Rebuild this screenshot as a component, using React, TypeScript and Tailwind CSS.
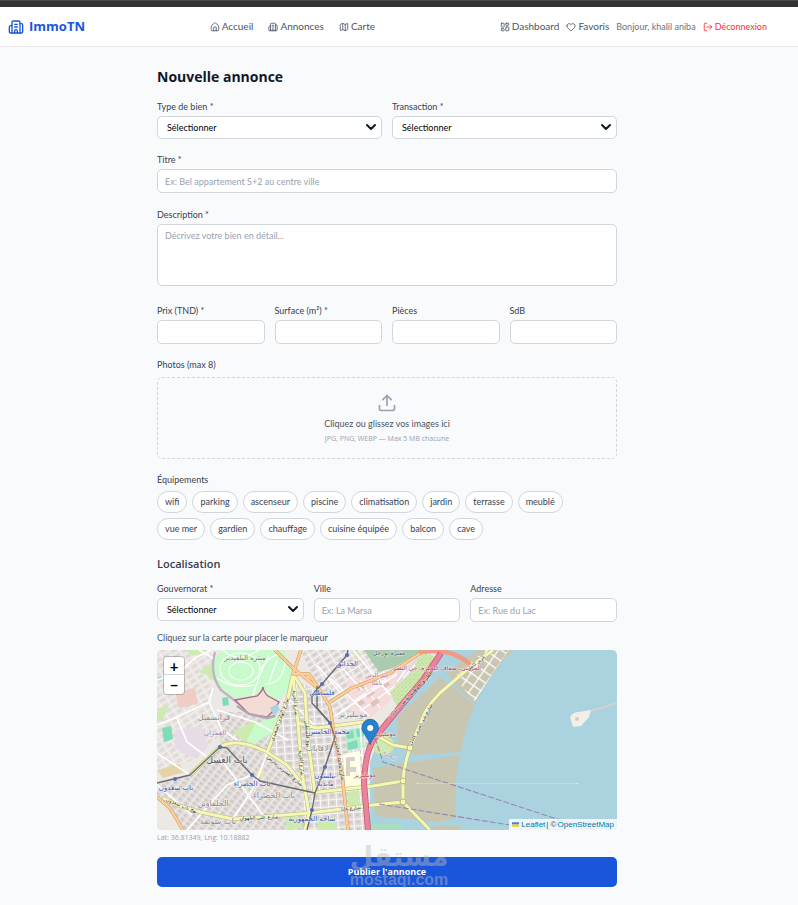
import { useState } from 'react';
import type { ReactNode } from 'react';
import { Building2, ChevronDown, Heart, House, LayoutDashboard, LogOut, Map as MapIcon, Upload } from 'lucide-react';

const EQUIPEMENTS = [
  'wifi', 'parking', 'ascenseur', 'piscine', 'climatisation', 'jardin', 'terrasse', 'meublé',
  'vue mer', 'gardien', 'chauffage', 'cuisine équipée', 'balcon', 'cave',
];

const inputClass =
  'block w-full h-6 rounded-[5px] border border-gray-300 bg-white px-[7px] text-[9px] text-gray-900 placeholder:text-gray-400 focus:outline-none focus:border-blue-500';

function Field({ id, label, children }: { id: string; label: string; children: ReactNode }) {
  return (
    <div>
      <label htmlFor={id} className="mb-0.5 block text-[9px] leading-[14px] text-gray-700">
        {label}
      </label>
      {children}
    </div>
  );
}

function SelectBox({ id }: { id: string }) {
  return (
    <div className="relative">
      <select
        id={id}
        className="block h-[23px] w-full appearance-none rounded-[5px] border border-gray-300 bg-white px-[9px] text-[9px] text-black focus:border-blue-500 focus:outline-none"
      >
        <option>Sélectionner</option>
      </select>
      <ChevronDown strokeWidth={3} className="pointer-events-none absolute right-[3px] top-[3px] h-4 w-4 text-gray-900" />
    </div>
  );
}

function Header() {
  const links = [
    { label: 'Accueil', icon: House },
    { label: 'Annonces', icon: Building2 },
    { label: 'Carte', icon: MapIcon },
  ];
  return (
    <header className="border-b border-gray-200 bg-white">
      <div className="flex h-[39px] items-center justify-between pl-2 pr-[31px]">
        <a href="#" className="flex items-center gap-[5px] font-['Open_Sans',sans-serif] text-[13px] font-bold text-[#1a56db]">
          <Building2 className="h-4 w-4" />
          ImmoTN
        </a>
        <nav className="flex items-center gap-[15px] text-[10px] text-gray-600">
          {links.map((link) => (
            <a key={link.label} href="#" className="flex items-center gap-0.5">
              <link.icon className="h-2.5 w-2.5" />
              {link.label}
            </a>
          ))}
        </nav>
        <div className="flex items-center gap-[7px] text-[10px] text-gray-600">
          <a href="#" className="flex items-center gap-0.5">
            <LayoutDashboard className="h-2.5 w-2.5" />
            Dashboard
          </a>
          <a href="#" className="flex items-center gap-0.5">
            <Heart className="h-2.5 w-2.5" />
            Favoris
          </a>
          <span className="text-[9px] text-gray-500">Bonjour, khalil aniba</span>
          <button type="button" className="flex items-center gap-0.5 text-[9px] text-red-500">
            <LogOut className="h-2.5 w-2.5" />
            Déconnexion
          </button>
        </div>
      </div>
    </header>
  );
}

// road geometry, in map units
const yellowRoads = [
  'M336 0L313 17L283 43Q268 58 264 72L253 98Q247 115 246 131V152L273 180',
  'M253 98L236 95L220 86',
  'M246 131L216 136L153 143',
  'M246 152L216 155L153 163L103 167L76 169L43 162L20 155L6 148',
  'M136 27L141 73L145 123L152 163L148 180',
  'M136 24L148 43L151 90L158 143',
  'M136 24L131 48L110 103',
  'M33 125L63 97Q80 87 110 102L130 115L146 135',
  'M141 73L160 78L206 72L218 82',
];
const orangeRoads = [
  'M118 0L136 18L163 40L173 57L178 90L185 123L191 180',
  'M144 0L136 24L152 24L163 40',
  'M173 52L195 38L233 23L268 0',
  'M0 147L13 158L26 180',
];
const railways = [
  'M0 133L33 125L63 97L70 98L95 125L103 131L158 143',
  'M191 0L190 5L165 34L155 45V53L173 73L178 87L168 117L158 143L155 160L150 180',
  'M160 36L160 58L173 73',
];
const whiteStreets = [
  'M0 30L20 24L38 8L54 0', 'M0 75L18 68L52 52L56 38', 'M20 68L30 92L50 107L63 97', 'M0 103L33 125',
  'M56 8L42 0', 'M52 52L65 80L80 90', 'M110 103L98 135L76 169', 'M60 60L98 72L131 90', 'M131 48L160 78',
  'M196 0L233 45', 'M173 28L212 66', 'M178 66L240 24', 'M180 12L205 40', 'M196 100L207 135', 'M176 108L206 105',
  'M190 158L210 160', 'M160 15L185 45', 'M30 180L70 135L95 125', 'M63 108L110 170', 'M0 135L35 165', 'M203 72L207 132',
];
const stations = [[190, 5], [165, 34], [173, 73], [168, 117], [155, 160], [95, 125], [63, 97], [18, 129]];

const placeLabels = [
  { x: 88, y: 10, size: 7, fill: '#4f8a62', text: 'منتزه البلفيدير' },
  { x: 190, y: 16, size: 7, fill: '#3d4fb0', text: 'الحدائق' },
  { x: 165, y: 45, size: 7, fill: '#3d4fb0', text: 'فلسطين' },
  { x: 172, y: 84, size: 7, fill: '#3d4fb0', text: 'محمد الخامس' },
  { x: 168, y: 128, size: 7, fill: '#3d4fb0', text: 'نيلسون' },
  { x: 168, y: 136, size: 7, fill: '#3d4fb0', text: 'مانديلا' },
  { x: 155, y: 171, size: 7, fill: '#3d4fb0', text: 'ساحة الجمهورية' },
  { x: 95, y: 136, size: 7, fill: '#3d4fb0', text: 'باب الخضراء' },
  { x: 19, y: 140, size: 7, fill: '#3d4fb0', text: 'باب سعدون' },
  { x: 57, y: 70, size: 8, fill: '#88888c', text: 'فرانسفيل' },
  { x: 58, y: 85, size: 7, fill: '#a37ca8', text: 'العمران' },
  { x: 70, y: 113, size: 9, fill: '#55555a', text: 'باب العسل' },
  { x: 117, y: 148, size: 8, fill: '#88888c', text: 'باب الخضراء' },
  { x: 56, y: 156, size: 8, fill: '#88888c', text: 'الحلفاوين' },
  { x: 61, y: 174, size: 8, fill: '#88888c', text: 'باب سويقة' },
  { x: 196, y: 67, size: 8, fill: '#88888c', text: 'مونبليزير' },
  { x: 160, y: 101, size: 8, fill: '#88888c', text: 'لافايات' },
  { x: 232, y: 5, size: 6, fill: '#55555a', text: 'مقبرة بورجل' },
  { x: 220, y: 27, size: 6, fill: '#b06c95', text: 'خير الدين' },
  { x: 220, y: 35, size: 6, fill: '#b06c95', text: 'باشا' },
  { x: 280, y: 20, size: 6, fill: '#b8324e', text: 'المرسى، ضفاف البحيرة، حي النصر' },
  { x: 228, y: 86, size: 6, fill: '#b8324e', text: 'مونبليزير' },
  { x: 208, y: 127, size: 6, fill: '#b8324e', text: 'مونبليزير' },
  { x: 232, y: 107, size: 5, fill: '#a37ca8', rotate: 35, text: 'البحيرة' },
  { x: 265, y: 75, size: 5, fill: '#333', rotate: -62, text: 'شارع عبد العزيز كامل' },
  { x: 254, y: 46, size: 5, fill: '#333', rotate: -46, text: 'الطريق الوطنية تونس - بنزرت' },
  { x: 320, y: 14, size: 5, fill: '#333', rotate: -38, text: 'عزيز كامل' },
  { x: 124, y: 70, size: 5, fill: '#333', rotate: -70, text: 'شارع الهادي السعيدي' },
  { x: 137, y: 53, size: 5, fill: '#333', rotate: 85, text: 'شارع الحرية' },
  { x: 149, y: 84, size: 5, fill: '#333', rotate: 86, text: 'نهج فلسطين' },
  { x: 143, y: 113, size: 5, fill: '#333', rotate: 86, text: 'شارع الحرية' },
  { x: 181, y: 110, size: 5, fill: '#333', rotate: 80, text: 'شارع محمد الخامس' },
  { x: 127, y: 122, size: 5, fill: '#333', rotate: 40, text: 'شارع العشرين مارس' },
  { x: 102, y: 169, size: 5, fill: '#333', rotate: -2, text: 'شارع علي البلهوان' },
  { x: 194, y: 160, size: 5, fill: '#333', rotate: -5, text: 'شارع غانا' },
  { x: 24, y: 157, size: 5, fill: '#333', rotate: 22, text: 'نهج باب سعدون' },
];

function MapCanvas() {
  return (
    <svg
      viewBox="0 0 460 180"
      preserveAspectRatio="xMidYMid slice"
      className="block h-full w-full"
      role="img"
      aria-label="Carte"
      fontFamily='"DejaVu Sans", sans-serif'
    >
      <defs>
        <pattern id="streetsA" width="9" height="6" patternUnits="userSpaceOnUse" patternTransform="rotate(-32)">
          <rect width="9" height="6" fill="#e2dddb" />
          <path d="M0 0H9M0 0V6" stroke="#fff" strokeWidth="1.5" />
          <path d="M3 3.5h4" stroke="#cfc6c3" strokeWidth="1.4" />
        </pattern>
        <pattern id="streetsB" width="8" height="7" patternUnits="userSpaceOnUse" patternTransform="rotate(-4)">
          <rect width="8" height="7" fill="#ded9d8" />
          <path d="M0 0H8M0 0V7" stroke="#fff" strokeWidth="1.7" />
          <path d="M3 2.5h3v2h-3z" fill="#cdc4bf" />
        </pattern>
        <pattern id="streetsC" width="7" height="5" patternUnits="userSpaceOnUse" patternTransform="rotate(38)">
          <rect width="7" height="5" fill="#d9d3d1" />
          <path d="M0 0H7M2 0V5" stroke="#f7f5f4" strokeWidth="1" />
          <path d="M4 3h2" stroke="#c2b9b8" strokeWidth="1.2" />
        </pattern>
        <pattern id="blocks" width="9" height="9" patternUnits="userSpaceOnUse" patternTransform="rotate(35)">
          <path d="M0 0H9M0 0V9" stroke="#fff" strokeWidth="2.4" />
        </pattern>
        <pattern id="orchard" width="4" height="4" patternUnits="userSpaceOnUse">
          <circle cx="1" cy="1" r=".6" fill="#d99a6c" />
          <circle cx="3" cy="3" r=".5" fill="#8fcf7e" />
        </pattern>
      </defs>

      <rect width="460" height="180" fill="#aad3df" />

      {/* urban ground */}
      <path d="M0 0H286L266 30L243 57L222 88L213 112V180H0Z" fill="#ece8e4" />
      <path d="M0 0H56L54 50L64 84L40 108L0 125Z" fill="url(#streetsA)" opacity=".55" />
      <path d="M144 0H208L240 30L212 70L175 68L160 36Z" fill="url(#streetsA)" />
      <path d="M62 62L128 62L110 103L146 135L153 180H26L0 145V135L33 125L63 97Z" fill="url(#streetsC)" />
      <path d="M131 48L136 27L165 45L176 80L212 76L208 180H148L143 125L112 103Z" fill="url(#streetsB)" />

      {/* land use */}
      <path d="M190 30L240 22L262 8L232 52L212 70L192 60Z" fill="#f5dcdc" />
      <path d="M192 42L207 32M197 51L229 29M203 61L238 36M203 30L223 58M220 25L233 45" stroke="#fff" strokeWidth="1.2" />
      <g fill="#ddc2bd">
        <path d="M199 37l6-4 3 4-6 4zM208 44l7-5 3 4-7 5zM213 53l7-5 3 4-7 5zM225 34l5-4 3 5-5 3zM214 31l5-3 2 3-5 3zM200 52l5-3 3 4-5 3z" />
      </g>
      <path d="M207 0H266L236 18L222 22Z" fill="#aacbaf" />
      <path d="M233 43L266 3L284 8L242 60Z" fill="#cdebb0" />
      <path d="M233 43L266 3L284 8L242 60Z" fill="url(#orchard)" />
      <path d="M240 26L262 6L256 22L242 34Z" fill="#e3dcda" />
      <path d="M240 32L250 18M246 28L258 15" stroke="#fff" strokeWidth="1.3" />
      <path d="M18 42L38 38L41 54L22 58Z" fill="#efcdc4" />
      <path d="M18 80L44 76L51 97L36 108L18 98Z" fill="#e6dbe6" />
      <path d="M42 22L56 12L60 33L48 24ZM28 0H52L36 6ZM0 60L12 54L6 70L0 72Z" fill="#cdebb0" />
      <path d="M5 78L14 76L16 89L7 92ZM65 48L71 47L72 55L66 56ZM0 28L4 26V31Z" fill="#7fdcb8" />
      <path d="M76 82L98 70L104 74L88 92Z" fill="#cdebb0" />
      <path d="M98 74L120 66L124 78L96 94L90 90Z" fill="#c8facc" />
      <path d="M0 120L22 114L28 122L6 128Z" fill="#e5d3a8" />
      <path d="M188 80L206 77L208 98L190 101Z" fill="#bdeccd" />
      <path d="M189 82L196 80L197 88L190 89ZM199 79L206 78L207 86L200 87ZM190 93L200 90L201 98L191 100Z" fill="#7fdcb8" />
      <path d="M186 104L203 101L204 136L188 137Z" fill="#ffffe0" />
      <path d="M189 107h9v4h-5v6h6v5h-6v4h-4z" fill="#d9d0c9" />
      <path d="M195 0L205 4L200 10ZM127 165L146 168L144 178L130 180ZM162 170L178 166L180 180H160ZM190 142L202 140L204 160L192 160Z" fill="#cdebb0" />
      <path d="M102 118l6 3-3 7-6-3z" fill="#efe3b0" />
      <path d="M218 88Q226 80 236 92Q238 104 224 104Q214 102 218 88Z" fill="#cdebb0" stroke="#e5e29a" strokeWidth="1.5" />

      {/* park du Belvédère */}
      <path d="M66 0L56 10L57 24L62 37L78 48L96 46L106 37L112 46L122 50L132 40L135 20L126 0Z" fill="#c8facc" />
      <g fill="none" stroke="#fff" strokeWidth="1.1">
        <ellipse cx="83" cy="19" rx="20" ry="16" />
        <ellipse cx="84" cy="21" rx="12" ry="9" />
        <path d="M66 0Q80 14 102 0M103 20Q118 -2 128 8Q128 34 108 34M112 5Q100 30 96 46M60 28Q76 40 98 35M120 10L112 32" />
      </g>
      <path d="M58 2Q52 24 64 40L82 54" fill="none" stroke="#bfb3c4" strokeWidth="2.4" />
      <path d="M78 50L100 46Q105 42 106 37Q107 43 111 46L122 52L117 60L110 67L92 64L86 58Z" fill="#f2dcd4" stroke="#a56a86" strokeWidth="1.3" />
      <path d="M80 56L92 64L110 68L118 66" fill="none" stroke="#b3a4b4" strokeWidth="2.4" />
      <path d="M113 58l7-4 3 6-6 5z" fill="#aad3df" />

      {/* white streets */}
      <g fill="none" stroke="#fff" strokeWidth="1.7">
        {whiteStreets.map((d) => <path key={d} d={d} />)}
      </g>

      {/* lake flats */}
      <g fill="#c8c6b1">
        <path d="M283 27L302 42L318 56Q308 76 304 102L258 105L241 97V66Z" />
        <path d="M216 118L303 105Q297 132 299 168L282 172L218 166Z" />
        <path d="M290 22L320 0H356Q330 28 318 54L300 38Z" />
        <path d="M262 180L285 175L303 176L304 180Z" />
      </g>
      <path d="M297 27L328 0H352L333 27L318 52Z" fill="url(#blocks)" />
      <path d="M214 174L243 174L246 180H214Z" fill="#a9dfc0" />
      <path d="M413 67Q416 62 422 62L434 60L432 67L424 76L416 77Z" fill="#f2efe9" />
      <path d="M434 61L460 53" stroke="#d8d2cc" strokeWidth="1.4" />
      <circle cx="420" cy="69" r="2" fill="#d6cbc6" />

      {/* main roads */}
      <g fill="none" strokeLinejoin="round">
        {yellowRoads.map((d) => <path key={d} d={d} stroke="#b9b77a" strokeWidth="4" />)}
        {yellowRoads.map((d) => <path key={d} d={d} stroke="#f5f7b4" strokeWidth="3" />)}
        {orangeRoads.map((d) => <path key={d} d={d} stroke="#d3965c" strokeWidth="3.4" />)}
        {orangeRoads.map((d) => <path key={d} d={d} stroke="#fbcf98" strokeWidth="2.4" />)}
        <path d="M313 14Q298 1 278 1L262 2" stroke="#f29a88" strokeWidth="4.5" />
        <path d="M284 3L266 30L243 57L220 85Q208 98 207 133L211 180" stroke="#cf5574" strokeWidth="6" />
        <path d="M284 3L266 30L243 57L220 85Q208 98 207 133L211 180" stroke="#e8859a" strokeWidth="4.5" />
        {railways.map((d) => <path key={d} d={d} stroke="#6b6b6f" strokeWidth="1.4" />)}
        <path d="M218 88L226 112L403 170L440 180M222 154L353 175L400 180" stroke="#9787ad" strokeWidth="1.1" strokeDasharray="6 2" />
        <path d="M260 133.500H420" stroke="#c6e2ea" strokeWidth=".6" />
      </g>
      <g fill="#fff">
        <rect x="260" y="133" width="1" height="1" />
        <rect x="420" y="133" width="1" height="1" />
      </g>
      <g fill="#f5f7b4" stroke="#b9b77a" strokeWidth="1">
        <circle cx="253" cy="98" r="3" />
        <circle cx="246" cy="131" r="3" />
        <circle cx="246" cy="152" r="3" />
      </g>

      {stations.map(([x, y]) => (
        <circle key={`${x}-${y}`} cx={x} cy={y} r="2" fill="#5568c0" />
      ))}

      {placeLabels.map((l, i) => (
        <text
          key={i}
          x={l.x}
          y={l.y}
          fontSize={l.size}
          fill={l.fill}
          textAnchor="middle"
          stroke="#fff"
          strokeOpacity=".6"
          strokeWidth="1"
          paintOrder="stroke"
          transform={l.rotate ? `rotate(${l.rotate} ${l.x} ${l.y})` : undefined}
        >
          {l.text}
        </text>
      ))}

      {/* marker */}
      <path d="M213 94.500C211 87 205 83 205 77.500A8.200 8.200 0 0 1 221.400 77.500C221.400 83 216 87 213 94.500Z" fill="#2a81cb" stroke="#2470b0" strokeWidth="1" />
      <circle cx="213.200" cy="78" r="3" fill="#fff" />
    </svg>
  );
}

export default function App() {
  const [selected, setSelected] = useState<string[]>([]);

  const toggle = (name: string) => {
    setSelected((prev) => (prev.includes(name) ? prev.filter((n) => n !== name) : [...prev, name]));
  };

  return (
    <div className="min-h-screen bg-[#f9fafb] font-['Lato','Open_Sans',sans-serif]">
      <div className="h-[7px] border-t border-[#4a4a4a] bg-[#333333]"></div>
      <Header />

      <main className="pb-[18px] pl-4 pr-10 pt-5">
        <form className="mx-auto max-w-[460px]" onSubmit={(e) => e.preventDefault()}>
          <h1 className="mb-[13px] font-['Open_Sans',sans-serif] text-[14px] font-bold leading-5 text-gray-900">
            Nouvelle annonce
          </h1>

          <div className="space-y-[14px]">
            <div className="grid grid-cols-2 gap-2.5">
              <Field id="type" label="Type de bien *">
                <SelectBox id="type" />
              </Field>
              <Field id="transaction" label="Transaction *">
                <SelectBox id="transaction" />
              </Field>
            </div>

            <Field id="titre" label="Titre *">
              <input id="titre" className={inputClass} placeholder="Ex: Bel appartement S+2 au centre ville" />
            </Field>

            <div className="pt-px">
              <Field id="description" label="Description *">
                <textarea
                  id="description"
                  className="block h-[62px] w-full resize-none rounded-[5px] border border-gray-300 bg-white px-[7px] py-1 text-[9px] leading-[13px] text-gray-900 placeholder:text-gray-400 focus:border-blue-500 focus:outline-none"
                  placeholder="Décrivez votre bien en détail..."
                />
              </Field>
            </div>

            <div className="grid grid-cols-4 gap-2.5 pt-1">
              <Field id="prix" label="Prix (TND) *">
                <input id="prix" className={inputClass} />
              </Field>
              <Field id="surface" label="Surface (m²) *">
                <input id="surface" className={inputClass} />
              </Field>
              <Field id="pieces" label="Pièces">
                <input id="pieces" className={inputClass} />
              </Field>
              <Field id="sdb" label="SdB">
                <input id="sdb" className={inputClass} />
              </Field>
            </div>

            {/* Photos */}
            <div>
              <p className="mb-[5px] text-[9px] leading-[14px] text-gray-700">Photos (max 8)</p>
              <label className="flex h-[82px] cursor-pointer flex-col items-center justify-center rounded-[5px] border border-dashed border-gray-300 pt-0.5">
                <Upload className="mb-1 h-5 w-5 text-gray-400" />
                <span className="text-[9px] leading-[14px] text-gray-600">Cliquez ou glissez vos images ici</span>
                <span className="mt-0.5 font-['Open_Sans',sans-serif] text-[7px] leading-3 text-gray-400">
                  JPG, PNG, WEBP — Max 5 MB chacune
                </span>
                <input type="file" multiple className="sr-only" />
              </label>
            </div>

            {/* Équipements */}
            <div>
              <p className="mb-1 text-[9px] leading-[14px] text-gray-700">Équipements</p>
              <div className="flex flex-wrap gap-[5px] pr-2">
                {EQUIPEMENTS.map((name) => (
                  <button
                    key={name}
                    type="button"
                    onClick={() => toggle(name)}
                    className={`h-[22px] rounded-full border px-[7px] text-[9px] ${
                      selected.includes(name)
                        ? 'border-[#1a56db] bg-[#1a56db] text-white'
                        : 'border-gray-300 bg-white text-gray-700'
                    }`}
                  >
                    {name}
                  </button>
                ))}
              </div>
            </div>
          </div>

          {/* Localisation */}
          <h2 className="mb-2.5 mt-4 font-['Open_Sans',sans-serif] text-[11px] font-semibold leading-4 text-gray-700">
            Localisation
          </h2>
          <div className="mb-[9px] grid grid-cols-3 gap-2.5">
            <Field id="gouvernorat" label="Gouvernorat *">
              <SelectBox id="gouvernorat" />
            </Field>
            <Field id="ville" label="Ville">
              <input id="ville" className={inputClass} placeholder="Ex: La Marsa" />
            </Field>
            <Field id="adresse" label="Adresse">
              <input id="adresse" className={inputClass} placeholder="Ex: Rue du Lac" />
            </Field>
          </div>
          <p className="mb-[5px] text-[9px] leading-[14px] text-gray-600">Cliquez sur la carte pour placer le marqueur</p>

          <div className="relative h-[180px] overflow-hidden rounded-[5px]">
            <MapCanvas />
            <div className="absolute left-[7px] top-[7px] flex w-5 flex-col divide-y divide-gray-300 overflow-hidden rounded-[3px] bg-white shadow-[0_0_0_1px_rgba(0,0,0,0.2)]">
              <button type="button" aria-label="Zoom avant" className="h-[18px] text-[15px] font-bold leading-[18px] text-black">
                +
              </button>
              <button type="button" aria-label="Zoom arrière" className="h-[19px] text-[15px] font-bold leading-[18px] text-black">
                −
              </button>
            </div>
            <div className="absolute bottom-0 right-0 flex items-center gap-px bg-white/80 px-[3px] font-['Liberation_Sans',sans-serif] text-[8px] leading-[11px] text-gray-700">
              <svg viewBox="0 0 12 8" className="mr-px h-[5px] w-[7px]">
                <path fill="#4C7BE1" d="M0 0h12v4H0z" />
                <path fill="#FFD500" d="M0 4h12v3H0z" />
                <path fill="#E0BC00" d="M0 7h12v1H0z" />
              </svg>
              <a href="#" className="text-[#0078a8]">Leaflet</a>
              <span>| ©</span>
              <a href="#" className="text-[#0078a8]">OpenStreetMap</a>
            </div>
          </div>
          <p className="mt-0.5 font-['Open_Sans',sans-serif] text-[7px] leading-3 text-gray-400">Lat: 36.81349, Lng: 10.18882</p>

          <div className="relative mt-[13px]">
            <button
              type="submit"
              className="h-[30px] w-full rounded-[5px] bg-[#1a56db] font-['Open_Sans',sans-serif] text-[9px] font-bold text-white hover:bg-blue-800"
            >
              Publier l'annonce
            </button>
            <div className="pointer-events-none absolute -top-[17px] left-1/2 ml-3 flex -translate-x-1/2 flex-col items-center text-[#bdbdbd]/45">
              <span className="font-['DejaVu_Sans',sans-serif] text-[27px] font-bold leading-[34px]">مستقل</span>
              <span className="-mt-0.5 font-['Liberation_Sans',sans-serif] text-[16px] font-bold leading-4">mostaqi.com</span>
            </div>
          </div>
        </form>
      </main>
    </div>
  );
}
